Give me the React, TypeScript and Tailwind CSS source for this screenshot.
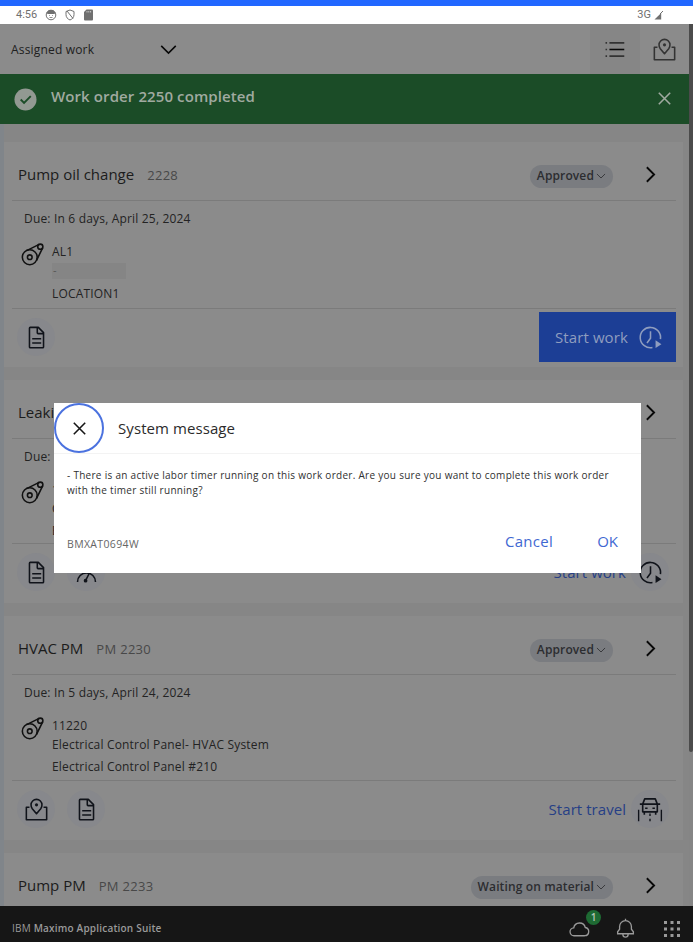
import type { ReactNode } from "react";

type IconProps = { className?: string; children: ReactNode; box?: string };

function Icon({ className = "size-[25px]", children, box = "0 0 32 32" }: IconProps) {
  return (
    <svg viewBox={box} fill="none" stroke="currentColor" strokeWidth="2" className={`shrink-0 ${className}`}>
      {children}
    </svg>
  );
}

const ChevronDown = ({ className }: { className?: string }) => (
  <Icon className={className}><path d="M6.7 11.3 16 20.6l9.3-9.3" /></Icon>
);
const ChevronRight = () => (
  <Icon className="size-[25px] text-[#080808]"><path strokeWidth="2.4" d="M11.3 6.7 20.6 16l-9.3 9.3" /></Icon>
);
const Close = ({ className }: { className?: string }) => (
  <Icon className={className}><path d="m8.7 8.7 14.6 14.6M23.3 8.7 8.7 23.3" /></Icon>
);
const DocumentIcon = () => (
  <Icon>
    <path strokeLinejoin="round" d="M8 3h10.3L25 9.700V28a1 1 0 0 1-1 1H8a1 1 0 0 1-1-1V4a1 1 0 0 1 1-1Z" />
    <path d="M17 3v7a1 1 0 0 0 1 1h7M10.500 17.500h11.500M10.500 23h11.500" />
  </Icon>
);
const MapIcon = () => (
  <Icon>
    <path strokeLinejoin="round" d="M7 13H3v16h26V13h-4" />
    <path strokeLinejoin="round" d="M16 21.500l-5.400-6.500A7.700 7.700 0 0 1 9 10a7 7 0 0 1 14 0 7.700 7.700 0 0 1-1.600 5Z" />
    <circle cx="16" cy="10" r="2" fill="currentColor" stroke="none" />
  </Icon>
);
const AssetIcon = () => (
  <Icon className="size-[25px] text-[#111]">
    <circle cx="12.500" cy="19.500" r="9.500" />
    <circle cx="12.500" cy="19.500" r="3" />
    <circle cx="26" cy="6" r="3.300" />
    <path d="M8.500 11 24.500 3M21 23.800 29 7.500" />
  </Icon>
);
const TimerIcon = () => (
  <Icon className="size-[25px]">
    <path d="M18.500 28.800A13 13 0 1 1 28.700 18" />
    <path d="M16 8v9l-4.500 6" />
    <path d="m22.500 19.500 7.500 5-7.500 5Z" fill="currentColor" stroke="none" />
  </Icon>
);
const MeterIcon = () => (
  <Icon>
    <path d="M4.500 28a11.500 11.500 0 0 1 23 0" />
    <path d="m15 26 5-10" />
    <circle cx="14.800" cy="26.500" r="1.400" fill="currentColor" />
  </Icon>
);
const TravelIcon = () => (
  <Icon className="size-[26px]">
    <path strokeLinejoin="round" d="m7 10 2.500-6.500h13L25 10M7 10h18v9.500H7ZM3.500 10H7M25 10h3.500M9 19.500V23M23 19.500V23M10 15h3M19 15h3" />
    <path strokeWidth="1.700" d="M2 17v14M30 17v14M16 21.500v3M16 28v3" />
  </Icon>
);

function RoundButton({ children }: { children: ReactNode }) {
  return (
    <span className="flex size-[38px] items-center justify-center rounded-full bg-[#87888c] text-[#10131a]">
      {children}
    </span>
  );
}

function StatusTag({ children }: { children: ReactNode }) {
  return (
    <span className="mt-[3px] mr-[25px] flex h-[23px] items-center rounded-full bg-[#7a7c80] pr-[5px] pl-[7px] text-[12px] font-semibold tracking-[0.12px] text-[#2c2d30]">
      {children}
      <ChevronDown className="size-[14px] text-[#303134]" />
    </span>
  );
}

type Order = {
  title: string;
  id: string;
  status: string;
  due: string;
  asset: string;
  description: string;
  location: string;
  height: string;
  bodyHeight: string;
  tools: ReactNode;
  action: ReactNode;
};

function OrderCard({ order }: { order: Order }) {
  return (
    <article className={`flex shrink-0 flex-col bg-[#8b8b8b] pr-[7px] pl-2 ${order.height}`}>
      <header className="flex h-[59px] shrink-0 items-center border-b border-[#7b7b7b] pt-[7px] pr-[13px] pl-1.5">
        <h2 className="text-[15px] text-[#1c1c1c]">{order.title}</h2>
        <span className="ml-[13px] flex-1 pt-0.5 text-[13px] tracking-[0.3px] text-[#484848]">{order.id}</span>
        <StatusTag>{order.status}</StatusTag>
        <ChevronRight />
      </header>
      {order.due && (
        <>
          <div className={`shrink-0 border-b border-[#7b7b7b] pt-2 pl-3 text-[12px] tracking-[0.18px] text-[#232323] ${order.bodyHeight}`}>
            <p className="h-5 leading-5">{order.due}</p>
            <div className="flex gap-[7px]">
              <div className="-ml-1 pt-[13px]"><AssetIcon /></div>
              <div className="pt-[13px]">
                <p className="h-5 leading-5">{order.asset}</p>
                <p className="h-[18px] leading-[18px]">
                  {order.description || <span className="mt-px block h-4 w-[74px] bg-[#858585] pl-px text-[11px] leading-[14px] text-[#555]">-</span>}
                </p>
                <p className="mt-[3px] leading-5">{order.location}</p>
              </div>
            </div>
          </div>
          <footer className="flex h-[56px] items-center justify-between pl-[5px]">
            <div className="flex gap-3">{order.tools}</div>
            {order.action}
          </footer>
        </>
      )}
    </article>
  );
}

function LinkAction({ label, children }: { label: string; children: ReactNode }) {
  return (
    <div className="flex items-center gap-[5px] pr-[7px] text-[15px] tracking-[0.05px] text-[#263f86]">
      {label}
      <RoundButton>{children}</RoundButton>
    </div>
  );
}

const orders: Order[] = [
  {
    title: "Pump oil change", id: "2228", status: "Approved",
    due: "Due: In 6 days, April 25, 2024", asset: "AL1", description: "", location: "LOCATION1",
    height: "h-[225px]", bodyHeight: "h-[108px]",
    tools: <RoundButton><DocumentIcon /></RoundButton>,
    action: (
      <button className="flex h-[50px] w-[137px] items-center justify-between bg-[#1c3e95] pr-[13px] pl-4 text-[15px] tracking-[0.1px] text-[#8f9dbf]">
        Start work <TimerIcon />
      </button>
    ),
  },
  {
    title: "Leaking pump", id: "2229", status: "Approved",
    due: "Due: In 6 days, April 25, 2024", asset: "11430", description: "Centrifugal pump", location: "Boiler room",
    height: "h-[223px]", bodyHeight: "h-[105px]",
    tools: <><RoundButton><DocumentIcon /></RoundButton><RoundButton><MeterIcon /></RoundButton></>,
    action: <LinkAction label="Start work"><TimerIcon /></LinkAction>,
  },
  {
    title: "HVAC PM", id: "PM 2230", status: "Approved",
    due: "Due: In 5 days, April 24, 2024", asset: "11220", description: "Electrical Control Panel- HVAC System",
    location: "Electrical Control Panel #210",
    height: "h-[224px]", bodyHeight: "h-[106px]",
    tools: <><RoundButton><MapIcon /></RoundButton><RoundButton><DocumentIcon /></RoundButton></>,
    action: <LinkAction label="Start travel"><TravelIcon /></LinkAction>,
  },
  {
    title: "Pump PM", id: "PM 2233", status: "Waiting on material",
    due: "", asset: "", description: "", location: "",
    height: "h-[224px]", bodyHeight: "h-[106px]", tools: null, action: null,
  },
];

function StatusBar() {
  return (
    <div className="flex h-[18px] shrink-0 items-center bg-white pr-[29px] pl-4 font-['Roboto',sans-serif] text-[11px] text-[#707070]">
      <span className="w-[29px]">4:56</span>
      <Icon box="0 0 12 12" className="size-3">
        <circle cx="6" cy="6" r="4.800" strokeWidth="1" />
        <path d="M1.500 3.500 4 1h4l2.500 2.500-1 1.500h-7Z" fill="currentColor" stroke="none" />
        <path strokeWidth=".8" d="M4 6.500h.8M7.200 6.500H8M4.500 8.500h3" />
      </Icon>
      <Icon box="0 0 12 12" className="ml-[7px] size-3">
        <path strokeWidth="1" d="M6 1 10 2.500v3C10 8.200 8.500 10 6 11 3.500 10 2 8.200 2 5.500v-3ZM3 2l6 7.500" />
      </Icon>
      <Icon box="0 0 12 12" className="ml-[6px] size-3">
        <path d="M4.500.5H10a1 1 0 0 1 1 1v9a1 1 0 0 1-1 1H3a1 1 0 0 1-1-1V3Z" fill="currentColor" stroke="none" />
        <path stroke="#fff" strokeWidth=".6" d="M5 2v1.500M6.800 2v1.500M8.600 2v1.500" />
      </Icon>
      <span className="ml-auto">3G</span>
      <Icon box="0 0 10 10" className="ml-[3px] size-2.5">
        <path d="M.5 9.500h6.700V3Z" fill="currentColor" stroke="none" />
        <path strokeWidth="1" d="m6 4 3-3" />
      </Icon>
    </div>
  );
}

function SystemMessage() {
  return (
    <div role="dialog" className="absolute top-[403px] left-[54px] flex h-[170px] w-[587px] flex-col bg-white">
      <div className="flex h-[51px] shrink-0 items-center border-b border-[#f3f3f3]">
        <button className="flex size-[50px] items-center justify-center rounded-full border-2 border-[#4b72df] text-[#161616]">
          <Close className="size-[25px]" />
        </button>
        <h1 className="ml-[14px] text-[15px] tracking-[0.08px] text-[#2b2b2b]">System message</h1>
      </div>
      <p className="mt-[14px] pl-[13px] text-[10px] leading-[15px] tracking-[0.285px] text-[#303030]">
        - There is an active labor timer running on this work order. Are you sure you want to complete this work order
        <br />
        with the timer still running?
      </p>
      <div className="mt-[23px] flex h-10 items-center pr-[23px] pl-[13px] text-[#3f68d2]">
        <span className="mr-auto pt-2 text-[10.500px] tracking-[0.35px] text-[#666]">BMXAT0694W</span>
        <button className="mr-[44px] text-[15px] tracking-[0.3px]">Cancel</button>
        <button className="text-[15px]">OK</button>
      </div>
    </div>
  );
}

export default function App() {
  return (
    <div className="relative flex h-[942px] w-[693px] flex-col overflow-hidden bg-[#868686] font-['Open_Sans','Noto_Sans',sans-serif]">
      <div className="h-[6px] shrink-0 bg-[#2167ff]" />
      <StatusBar />
      <div className="flex min-h-0 flex-1">
        <main className="flex min-w-0 flex-1 flex-col overflow-hidden">
          <div className="flex h-[50px] shrink-0 items-center bg-[#8b8b8b] pl-[11px] text-[#202020]">
            <span className="w-[145px] pt-px text-[12px] tracking-[0.18px]">Assigned work</span>
            <ChevronDown className="size-[25px] text-[#080808]" />
            <span className="ml-auto flex h-full w-[50px] items-center justify-center bg-[#868686] pr-[2px] text-[#333]">
              <Icon><path d="M9.500 7.500h19M9.500 24.500h19M4.500 7.500h2M4.500 16h2M4.500 24.500h2" /><path stroke="#080808" d="M9.500 16h19" /></Icon>
            </span>
            <span className="flex w-[49px] justify-center text-[#333]"><MapIcon /></span>
          </div>
          <div className="flex h-[50px] shrink-0 items-center bg-[#1b4c27] pr-[12px] pl-[14px] text-[#a0aaa0]">
            <svg viewBox="0 0 24 24" className="size-[23px] shrink-0">
              <circle cx="12" cy="12" r="11.500" fill="#929992" />
              <path d="m7 12 3.500 3.500 7-7" fill="none" stroke="#1b4c27" strokeWidth="2" />
            </svg>
            <span className="mr-auto mb-[5px] ml-[14px] text-[15px] font-semibold tracking-[0.1px]">Work order 2250 completed</span>
            <Close className="mb-px size-[25px]" />
          </div>
          <div className="flex min-h-0 flex-1 flex-col gap-[13px] overflow-hidden border-l-[4px] border-[#80858a] pt-[18px] pr-[6px]">
            {orders.map((order) => <OrderCard key={order.title} order={order} />)}
          </div>
        </main>
        <div className="w-1 shrink-0 bg-[#858585]"><div className="h-[728px] rounded-b bg-[#4b4b4b]" /></div>
      </div>
      <footer className="flex h-9 shrink-0 items-center bg-[#161616] pt-[9px] pr-[13px] pl-3 text-[10px] text-[#9a9a9a]">
        <span className="mr-auto tracking-[0.2px]">IBM <b className="font-semibold">Maximo Application Suite</b></span>
        <span className="relative">
          <Icon className="size-[21px]">
            <path d="M24 27H8a6 6 0 0 1-.8-12A9 9 0 0 1 24.800 14.500 6.300 6.300 0 0 1 24 27Z" />
          </Icon>
          <span className="absolute -top-[8px] left-[17px] flex size-[15px] items-center justify-center rounded-full bg-[#1e6a33] text-[10px] font-semibold text-[#b5c4b8]">1</span>
        </span>
        <Icon className="ml-[25px] size-[21px]">
          <path d="M28 24H4v-3l3-4v-4a9 9 0 0 1 18 0v4l3 4v3ZM12 24v1a4 4 0 0 0 8 0v-1M16 1v4" />
        </Icon>
        <svg viewBox="0 0 16 16" fill="currentColor" className="ml-[28px] size-4">
          {[0, 6.5, 13].flatMap((y) => [0, 6.5, 13].map((x) => <rect key={`${x}-${y}`} x={x} y={y} width="3" height="3" />))}
        </svg>
      </footer>
      <SystemMessage />
    </div>
  );
}
